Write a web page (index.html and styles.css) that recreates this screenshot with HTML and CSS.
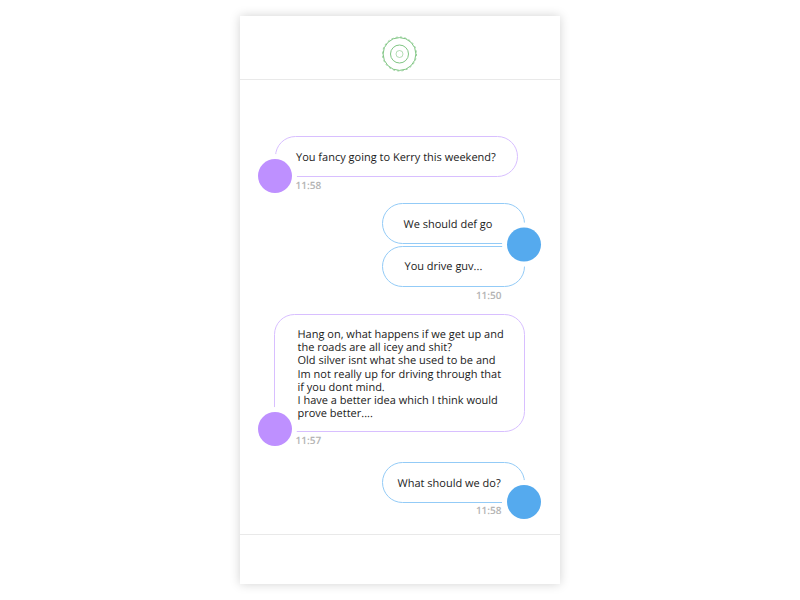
FILE: index.html
```html
<!DOCTYPE html>
<html lang="en">
<head>
<meta charset="utf-8">
<title>Chat</title>
<link rel="stylesheet" href="styles.css">
</head>
<body>
<main class="phone">
  <header class="header">
    <svg class="logo" viewBox="0 0 36 36" fill="none" stroke="#7fc583">
      <circle cx="17.5" cy="18" r="16.4"/>
      <circle cx="17.5" cy="18" r="17" stroke-width=".8" stroke-dasharray="2.2 2.25"/>
      <circle cx="17.5" cy="18" r="9"/>
      <circle cx="17.5" cy="18" r="3.5" stroke-width=".6"/>
    </svg>
  </header>
  <section class="messages">
    <article class="group received first">
      <div class="bubble short">You fancy going to Kerry this weekend?</div>
      <span class="avatar"></span>
      <time>11:58</time>
    </article>
    <article class="group sent pair">
      <div class="bubble">We should def go</div>
      <div class="bubble">You drive guv...</div>
      <span class="avatar"></span>
      <time>11:50</time>
    </article>
    <article class="group received story">
      <div class="bubble long">Hang on, what happens if we get up and<br>the roads are all icey and shit?<br>Old silver isnt what she used to be and<br>Im not really up for driving through that<br>if you dont mind.<br>I have a better idea which I think would<br>prove better....</div>
      <span class="avatar"></span>
      <time>11:57</time>
    </article>
    <article class="group sent last">
      <div class="bubble">What should we do?</div>
      <span class="avatar"></span>
      <time>11:58</time>
    </article>
  </section>
  <footer class="footer"></footer>
</main>
</body>
</html>
```
FILE: styles.css
```css
* { box-sizing: border-box; }
body {
  margin: 0;
  padding: 16px 0;
  background: #fff;
  font: 11px/13.2px "Open Sans", sans-serif;
  color: #1c1c1c;
  text-rendering: geometricPrecision;
}
.phone {
  display: flex;
  flex-direction: column;
  width: 320px;
  height: 568px;
  margin: 0 auto;
  background: #fff;
  box-shadow: 0 0 10px rgba(0, 0, 0, .18);
}
.header {
  display: flex;
  justify-content: center;
  height: 64px;
  padding-top: 20px;
  border-bottom: 1px solid #e9e9e9;
}
.logo { width: 36px; height: 36px; }
.messages {
  flex: 1;
  display: flex;
  flex-direction: column;
  padding: 56px 35px 0;
}
.footer { height: 50px; border-top: 1px solid #e9e9e9; }
.group { position: relative; display: flex; flex-direction: column; }
.sent { align-items: flex-end; }
.received { align-items: flex-start; }
.bubble {
  width: 143px;
  height: 41px;
  padding: 14px 0 0 20.5px;
  border: 1px solid #93cbf7;
  border-radius: 20.5px;
  white-space: nowrap;
}
.received .bubble { border-color: #d8bfff; }
.bubble.short { width: 243px; padding-left: 20px; }
.bubble.long {
  width: 251px;
  height: 118px;
  margin-left: -1px;
  padding: 13px 0 0 22.5px;
}
.avatar {
  position: absolute;
  width: 34px;
  height: 34px;
  border-radius: 50%;
  box-shadow: 0 0 0 5px #fff;
}
.received .avatar { left: -17px; background: #be90ff; }
.sent .avatar { right: -16px; background: #55aaee; }
time {
  position: relative;
  margin-top: 1px;
  font-size: 10px;
  line-height: 14px;
  font-weight: 600;
  color: #b3b3b3;
}
.received time { margin-left: 20.5px; }
.sent time { margin-right: 23.5px; }
.first { height: 67px; }
.first .avatar { top: 23px; }
.pair { height: 111px; }
.pair .bubble + .bubble { margin-top: 2px; padding: 13px 0 0 21.5px; }
.pair .avatar { top: 24px; transform: translateY(.5px); }
.story { height: 148px; }
.story .avatar { top: 98px; }
.last .bubble { padding-left: 14.5px; }
.last .avatar { top: 23px; }
.last time { margin-top: 0; }
```
